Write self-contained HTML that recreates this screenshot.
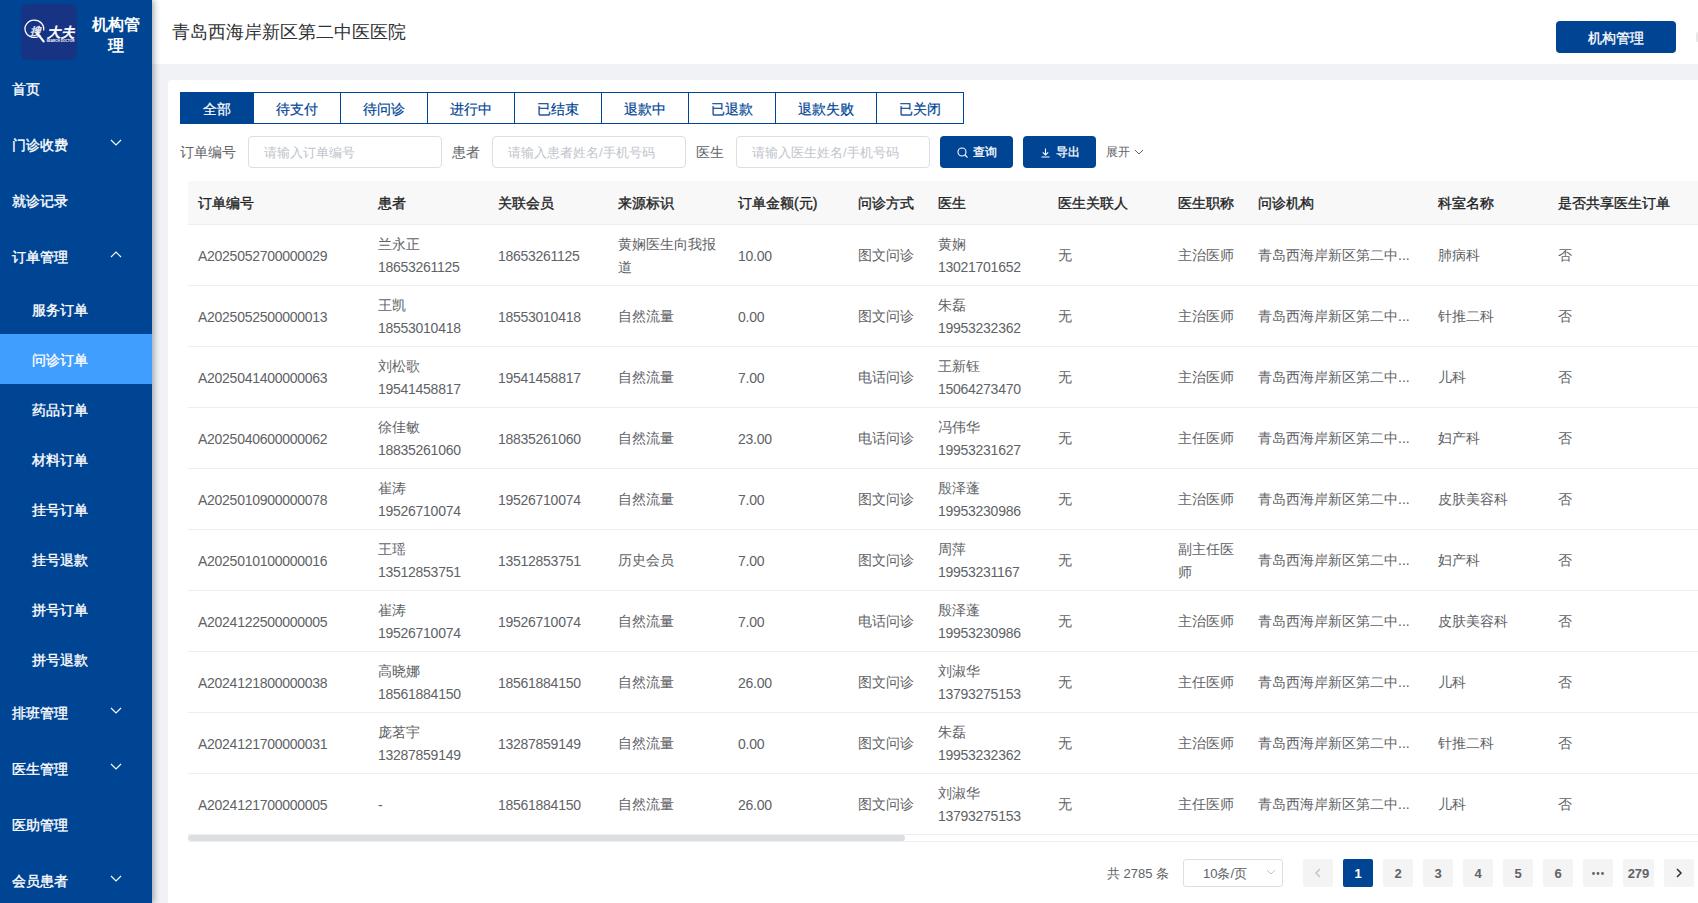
<!DOCTYPE html>
<html><head><meta charset="utf-8"><style>
*{box-sizing:border-box;margin:0;padding:0}
html,body{width:1698px;height:903px;overflow:hidden;background:#f0f2f5;font-family:"Liberation Sans",sans-serif;}
#side{position:absolute;left:0;top:0;width:152px;height:903px;background:#004494;box-shadow:2px 0 6px rgba(0,21,41,.35);z-index:5}
#logo{position:absolute;left:21px;top:4px;width:56px;height:56px;background:#173383;border-radius:6px}
#brand{position:absolute;left:86px;top:14px;width:60px;color:#fff;font-weight:bold;font-size:16px;line-height:21px;text-align:center}
.mi{position:absolute;left:0;width:152px;color:#fff;font-weight:normal;-webkit-text-stroke:0.35px #fff;font-size:14px;padding-left:12px;white-space:nowrap}
.mt{position:relative;top:1px}
.mi.sub{padding-left:32px}
.mi.act{background:#409eff}
.chev{position:absolute;left:110px;top:50%;margin-top:-5px}
#hdr{position:absolute;left:152px;top:0;width:1546px;height:64px;background:#fff}
#title{position:absolute;left:172px;top:20px;font-size:18px;line-height:24px;color:#303133;white-space:nowrap}
#btnorg{position:absolute;left:1556px;top:21px;width:120px;height:32px;background:#004494;border-radius:4px;color:#fff;font-size:14px;line-height:34px;text-align:center;-webkit-text-stroke:0.3px #fff}
#card{position:absolute;left:168px;top:80px;width:1600px;height:900px;background:#fff;border-radius:4px}
.tab{position:absolute;top:92px;height:32px;border:1px solid #004494;border-left:none;color:#004494;font-size:14px;line-height:31px;text-align:center;background:#fff}
.tab span{position:relative;top:1px;-webkit-text-stroke:0.2px currentColor}
.tab.on{background:#004494;color:#fff;border-left:1px solid #004494}
.lbl{position:absolute;top:136px;font-size:14px;line-height:33px;color:#606266;white-space:nowrap}
.inp{position:absolute;top:136px;width:194px;height:32px;border:1px solid #dcdfe6;border-radius:4px;font-size:13px;line-height:31px;color:#c0c4cc;padding-left:15px;white-space:nowrap}
.btn{position:absolute;top:136px;width:73px;height:32px;background:#004494;border-radius:4px;color:#fff;font-size:12px;line-height:33px;white-space:nowrap;-webkit-text-stroke:0.3px #fff}
#thead{position:absolute;left:188px;top:181px;width:1510px;height:44px;background:#f8f8f9;border-bottom:1px solid #ebeef5}
.h{position:absolute;top:181px;height:43px;line-height:44px;padding-left:10px;font-size:14px;font-weight:normal;-webkit-text-stroke:0.35px #1f1f1f;color:#1f1f1f;white-space:nowrap}
.c{position:absolute;height:60px;display:flex;align-items:center;padding-left:10px;padding-top:2px;font-size:14px;color:#606266;white-space:nowrap}
.n{letter-spacing:-0.27px}
.l2{line-height:23px}
.rl{position:absolute;left:188px;width:1510px;height:1px;background:#ebeef5}
#sb{position:absolute;left:188px;top:835px;width:717px;height:6px;background:#dddee0;border-radius:3px}
#sbl{position:absolute;left:188px;top:841px;width:1510px;height:1px;background:#ebeef5}
.pb{position:absolute;top:859px;height:28px;background:#f4f4f5;border-radius:2px;color:#606266;font-weight:bold;font-size:13px;line-height:29px;text-align:center}
.pon{background:#004494;color:#fff}
</style></head><body>
<div id="side">
  <div id="logo">
    <svg width="56" height="56" viewBox="0 0 56 56">
      <path d="M18.2 32.2 A9.4 8.6 0 1 1 22.6 26.5" fill="none" stroke="#fff" stroke-width="1.3"/>
      <path d="M16.8 30 L22.6 37.4" stroke="#fff" stroke-width="2.2" stroke-linecap="round"/>
      <text x="0" y="0" fill="#fff" stroke="#fff" stroke-width="0.3" font-size="11" transform="translate(8.5,31) skewX(-14)">搜</text>
      <text x="0" y="0" fill="#fff" stroke="#fff" stroke-width="0.7" font-size="13.5" transform="translate(26,33) skewX(-14)">大夫</text>
      <text x="25.5" y="38" fill="#fff" font-size="3.6" font-weight="bold" textLength="28" lengthAdjust="spacingAndGlyphs">SEARCH DOCTOR</text>
    </svg>
  </div>
  <div id="brand">机构管<br>理</div>
  <div class="mi" style="top:60px;height:56px;line-height:56px"><span class="mt">首页</span></div>
<div class="mi" style="top:116px;height:56px;line-height:56px"><span class="mt">门诊收费</span><svg class="chev" width="12" height="7" viewBox="0 0 12 7"><path d="M1 1 L6 6 L11 1" fill="none" stroke="#fff" stroke-width="1.1"/></svg></div>
<div class="mi" style="top:172px;height:56px;line-height:56px"><span class="mt">就诊记录</span></div>
<div class="mi" style="top:228px;height:56px;line-height:56px"><span class="mt">订单管理</span><svg class="chev" width="12" height="7" viewBox="0 0 12 7"><path d="M1 6 L6 1 L11 6" fill="none" stroke="#fff" stroke-width="1.1"/></svg></div>
<div class="mi sub" style="top:284px;height:50px;line-height:50px"><span class="mt">服务订单</span></div>
<div class="mi sub act" style="top:334px;height:50px;line-height:50px"><span class="mt">问诊订单</span></div>
<div class="mi sub" style="top:384px;height:50px;line-height:50px"><span class="mt">药品订单</span></div>
<div class="mi sub" style="top:434px;height:50px;line-height:50px"><span class="mt">材料订单</span></div>
<div class="mi sub" style="top:484px;height:50px;line-height:50px"><span class="mt">挂号订单</span></div>
<div class="mi sub" style="top:534px;height:50px;line-height:50px"><span class="mt">挂号退款</span></div>
<div class="mi sub" style="top:584px;height:50px;line-height:50px"><span class="mt">拼号订单</span></div>
<div class="mi sub" style="top:634px;height:50px;line-height:50px"><span class="mt">拼号退款</span></div>
<div class="mi" style="top:684px;height:56px;line-height:56px"><span class="mt">排班管理</span><svg class="chev" width="12" height="7" viewBox="0 0 12 7"><path d="M1 1 L6 6 L11 1" fill="none" stroke="#fff" stroke-width="1.1"/></svg></div>
<div class="mi" style="top:740px;height:56px;line-height:56px"><span class="mt">医生管理</span><svg class="chev" width="12" height="7" viewBox="0 0 12 7"><path d="M1 1 L6 6 L11 1" fill="none" stroke="#fff" stroke-width="1.1"/></svg></div>
<div class="mi" style="top:796px;height:56px;line-height:56px"><span class="mt">医助管理</span></div>
<div class="mi" style="top:852px;height:56px;line-height:56px"><span class="mt">会员患者</span><svg class="chev" width="12" height="7" viewBox="0 0 12 7"><path d="M1 1 L6 6 L11 1" fill="none" stroke="#fff" stroke-width="1.1"/></svg></div>
</div>
<div id="hdr"></div>
<div id="title">青岛西海岸新区第二中医医院</div>
<div id="btnorg">机构管理</div>
<div style="position:absolute;left:1696px;top:32px;width:4px;height:10px;background:#e6e6e6;border-radius:2px"></div>
<div id="card"></div>
<div class="tab on" style="left:180px;width:74px"><span>全部</span></div>
<div class="tab" style="left:254px;width:87px"><span>待支付</span></div>
<div class="tab" style="left:341px;width:87px"><span>待问诊</span></div>
<div class="tab" style="left:428px;width:87px"><span>进行中</span></div>
<div class="tab" style="left:515px;width:87px"><span>已结束</span></div>
<div class="tab" style="left:602px;width:87px"><span>退款中</span></div>
<div class="tab" style="left:689px;width:87px"><span>已退款</span></div>
<div class="tab" style="left:776px;width:101px"><span>退款失败</span></div>
<div class="tab" style="left:877px;width:87px"><span>已关闭</span></div>
<div class="lbl" style="left:180px">订单编号</div>
<div class="inp" style="left:248px">请输入订单编号</div>
<div class="lbl" style="left:452px">患者</div>
<div class="inp" style="left:492px">请输入患者姓名/手机号码</div>
<div class="lbl" style="left:696px">医生</div>
<div class="inp" style="left:736px">请输入医生姓名/手机号码</div>
<div class="btn" style="left:940px"><svg style="position:absolute;left:17px;top:11px" width="11" height="11" viewBox="0 0 11 11"><circle cx="5" cy="5" r="4" fill="none" stroke="#fff" stroke-width="1.1"/><path d="M8 8 L10.5 10.5" stroke="#fff" stroke-width="1.1"/></svg><span style="position:absolute;left:33px">查询</span></div>
<div class="btn" style="left:1023px"><svg style="position:absolute;left:17px;top:11px" width="11" height="11" viewBox="0 0 11 11"><path d="M5.5 1.5 V8 M2.8 5.3 L5.5 8 L8.2 5.3 M1.5 10 H9.5" fill="none" stroke="#fff" stroke-width="1.1"/></svg><span style="position:absolute;left:33px">导出</span></div>
<div class="lbl" style="left:1106px;font-size:12px">展开</div>
<svg style="position:absolute;left:1134px;top:149px" width="10" height="6" viewBox="0 0 10 6"><path d="M1 1 L5 5 L9 1" fill="none" stroke="#606266" stroke-width="1"/></svg>
<div id="thead"></div>
<div class="h" style="left:188px;width:180px">订单编号</div>
<div class="h" style="left:368px;width:120px">患者</div>
<div class="h" style="left:488px;width:120px">关联会员</div>
<div class="h" style="left:608px;width:120px">来源标识</div>
<div class="h" style="left:728px;width:120px">订单金额(元)</div>
<div class="h" style="left:848px;width:80px">问诊方式</div>
<div class="h" style="left:928px;width:120px">医生</div>
<div class="h" style="left:1048px;width:120px">医生关联人</div>
<div class="h" style="left:1168px;width:80px">医生职称</div>
<div class="h" style="left:1248px;width:180px">问诊机构</div>
<div class="h" style="left:1428px;width:120px">科室名称</div>
<div class="h" style="left:1548px;width:160px">是否共享医生订单</div>
<div class="c" style="left:188px;top:225px;width:180px"><span class="n">A2025052700000029</span></div>
<div class="c" style="left:368px;top:225px;width:120px"><div class="l2">兰永正<br><span class="n">18653261125</span></div></div>
<div class="c" style="left:488px;top:225px;width:120px"><span class="n">18653261125</span></div>
<div class="c" style="left:608px;top:225px;width:120px"><div class="l2">黄娴医生向我报<br>道</div></div>
<div class="c" style="left:728px;top:225px;width:120px"><span class="n">10.00</span></div>
<div class="c" style="left:848px;top:225px;width:80px">图文问诊</div>
<div class="c" style="left:928px;top:225px;width:120px"><div class="l2">黄娴<br><span class="n">13021701652</span></div></div>
<div class="c" style="left:1048px;top:225px;width:120px">无</div>
<div class="c" style="left:1168px;top:225px;width:80px">主治医师</div>
<div class="c" style="left:1248px;top:225px;width:180px">青岛西海岸新区第二中...</div>
<div class="c" style="left:1428px;top:225px;width:120px">肺病科</div>
<div class="c" style="left:1548px;top:225px;width:160px">否</div>
<div class="rl" style="top:285px"></div><div class="c" style="left:188px;top:286px;width:180px"><span class="n">A2025052500000013</span></div>
<div class="c" style="left:368px;top:286px;width:120px"><div class="l2">王凯<br><span class="n">18553010418</span></div></div>
<div class="c" style="left:488px;top:286px;width:120px"><span class="n">18553010418</span></div>
<div class="c" style="left:608px;top:286px;width:120px">自然流量</div>
<div class="c" style="left:728px;top:286px;width:120px"><span class="n">0.00</span></div>
<div class="c" style="left:848px;top:286px;width:80px">图文问诊</div>
<div class="c" style="left:928px;top:286px;width:120px"><div class="l2">朱磊<br><span class="n">19953232362</span></div></div>
<div class="c" style="left:1048px;top:286px;width:120px">无</div>
<div class="c" style="left:1168px;top:286px;width:80px">主治医师</div>
<div class="c" style="left:1248px;top:286px;width:180px">青岛西海岸新区第二中...</div>
<div class="c" style="left:1428px;top:286px;width:120px">针推二科</div>
<div class="c" style="left:1548px;top:286px;width:160px">否</div>
<div class="rl" style="top:346px"></div><div class="c" style="left:188px;top:347px;width:180px"><span class="n">A2025041400000063</span></div>
<div class="c" style="left:368px;top:347px;width:120px"><div class="l2">刘松歌<br><span class="n">19541458817</span></div></div>
<div class="c" style="left:488px;top:347px;width:120px"><span class="n">19541458817</span></div>
<div class="c" style="left:608px;top:347px;width:120px">自然流量</div>
<div class="c" style="left:728px;top:347px;width:120px"><span class="n">7.00</span></div>
<div class="c" style="left:848px;top:347px;width:80px">电话问诊</div>
<div class="c" style="left:928px;top:347px;width:120px"><div class="l2">王新钰<br><span class="n">15064273470</span></div></div>
<div class="c" style="left:1048px;top:347px;width:120px">无</div>
<div class="c" style="left:1168px;top:347px;width:80px">主治医师</div>
<div class="c" style="left:1248px;top:347px;width:180px">青岛西海岸新区第二中...</div>
<div class="c" style="left:1428px;top:347px;width:120px">儿科</div>
<div class="c" style="left:1548px;top:347px;width:160px">否</div>
<div class="rl" style="top:407px"></div><div class="c" style="left:188px;top:408px;width:180px"><span class="n">A2025040600000062</span></div>
<div class="c" style="left:368px;top:408px;width:120px"><div class="l2">徐佳敏<br><span class="n">18835261060</span></div></div>
<div class="c" style="left:488px;top:408px;width:120px"><span class="n">18835261060</span></div>
<div class="c" style="left:608px;top:408px;width:120px">自然流量</div>
<div class="c" style="left:728px;top:408px;width:120px"><span class="n">23.00</span></div>
<div class="c" style="left:848px;top:408px;width:80px">电话问诊</div>
<div class="c" style="left:928px;top:408px;width:120px"><div class="l2">冯伟华<br><span class="n">19953231627</span></div></div>
<div class="c" style="left:1048px;top:408px;width:120px">无</div>
<div class="c" style="left:1168px;top:408px;width:80px">主任医师</div>
<div class="c" style="left:1248px;top:408px;width:180px">青岛西海岸新区第二中...</div>
<div class="c" style="left:1428px;top:408px;width:120px">妇产科</div>
<div class="c" style="left:1548px;top:408px;width:160px">否</div>
<div class="rl" style="top:468px"></div><div class="c" style="left:188px;top:469px;width:180px"><span class="n">A2025010900000078</span></div>
<div class="c" style="left:368px;top:469px;width:120px"><div class="l2">崔涛<br><span class="n">19526710074</span></div></div>
<div class="c" style="left:488px;top:469px;width:120px"><span class="n">19526710074</span></div>
<div class="c" style="left:608px;top:469px;width:120px">自然流量</div>
<div class="c" style="left:728px;top:469px;width:120px"><span class="n">7.00</span></div>
<div class="c" style="left:848px;top:469px;width:80px">图文问诊</div>
<div class="c" style="left:928px;top:469px;width:120px"><div class="l2">殷泽蓬<br><span class="n">19953230986</span></div></div>
<div class="c" style="left:1048px;top:469px;width:120px">无</div>
<div class="c" style="left:1168px;top:469px;width:80px">主治医师</div>
<div class="c" style="left:1248px;top:469px;width:180px">青岛西海岸新区第二中...</div>
<div class="c" style="left:1428px;top:469px;width:120px">皮肤美容科</div>
<div class="c" style="left:1548px;top:469px;width:160px">否</div>
<div class="rl" style="top:529px"></div><div class="c" style="left:188px;top:530px;width:180px"><span class="n">A2025010100000016</span></div>
<div class="c" style="left:368px;top:530px;width:120px"><div class="l2">王瑶<br><span class="n">13512853751</span></div></div>
<div class="c" style="left:488px;top:530px;width:120px"><span class="n">13512853751</span></div>
<div class="c" style="left:608px;top:530px;width:120px">历史会员</div>
<div class="c" style="left:728px;top:530px;width:120px"><span class="n">7.00</span></div>
<div class="c" style="left:848px;top:530px;width:80px">图文问诊</div>
<div class="c" style="left:928px;top:530px;width:120px"><div class="l2">周萍<br><span class="n">19953231167</span></div></div>
<div class="c" style="left:1048px;top:530px;width:120px">无</div>
<div class="c" style="left:1168px;top:530px;width:80px"><div class="l2">副主任医<br>师</div></div>
<div class="c" style="left:1248px;top:530px;width:180px">青岛西海岸新区第二中...</div>
<div class="c" style="left:1428px;top:530px;width:120px">妇产科</div>
<div class="c" style="left:1548px;top:530px;width:160px">否</div>
<div class="rl" style="top:590px"></div><div class="c" style="left:188px;top:591px;width:180px"><span class="n">A2024122500000005</span></div>
<div class="c" style="left:368px;top:591px;width:120px"><div class="l2">崔涛<br><span class="n">19526710074</span></div></div>
<div class="c" style="left:488px;top:591px;width:120px"><span class="n">19526710074</span></div>
<div class="c" style="left:608px;top:591px;width:120px">自然流量</div>
<div class="c" style="left:728px;top:591px;width:120px"><span class="n">7.00</span></div>
<div class="c" style="left:848px;top:591px;width:80px">电话问诊</div>
<div class="c" style="left:928px;top:591px;width:120px"><div class="l2">殷泽蓬<br><span class="n">19953230986</span></div></div>
<div class="c" style="left:1048px;top:591px;width:120px">无</div>
<div class="c" style="left:1168px;top:591px;width:80px">主治医师</div>
<div class="c" style="left:1248px;top:591px;width:180px">青岛西海岸新区第二中...</div>
<div class="c" style="left:1428px;top:591px;width:120px">皮肤美容科</div>
<div class="c" style="left:1548px;top:591px;width:160px">否</div>
<div class="rl" style="top:651px"></div><div class="c" style="left:188px;top:652px;width:180px"><span class="n">A2024121800000038</span></div>
<div class="c" style="left:368px;top:652px;width:120px"><div class="l2">高晓娜<br><span class="n">18561884150</span></div></div>
<div class="c" style="left:488px;top:652px;width:120px"><span class="n">18561884150</span></div>
<div class="c" style="left:608px;top:652px;width:120px">自然流量</div>
<div class="c" style="left:728px;top:652px;width:120px"><span class="n">26.00</span></div>
<div class="c" style="left:848px;top:652px;width:80px">图文问诊</div>
<div class="c" style="left:928px;top:652px;width:120px"><div class="l2">刘淑华<br><span class="n">13793275153</span></div></div>
<div class="c" style="left:1048px;top:652px;width:120px">无</div>
<div class="c" style="left:1168px;top:652px;width:80px">主任医师</div>
<div class="c" style="left:1248px;top:652px;width:180px">青岛西海岸新区第二中...</div>
<div class="c" style="left:1428px;top:652px;width:120px">儿科</div>
<div class="c" style="left:1548px;top:652px;width:160px">否</div>
<div class="rl" style="top:712px"></div><div class="c" style="left:188px;top:713px;width:180px"><span class="n">A2024121700000031</span></div>
<div class="c" style="left:368px;top:713px;width:120px"><div class="l2">庞茗宇<br><span class="n">13287859149</span></div></div>
<div class="c" style="left:488px;top:713px;width:120px"><span class="n">13287859149</span></div>
<div class="c" style="left:608px;top:713px;width:120px">自然流量</div>
<div class="c" style="left:728px;top:713px;width:120px"><span class="n">0.00</span></div>
<div class="c" style="left:848px;top:713px;width:80px">图文问诊</div>
<div class="c" style="left:928px;top:713px;width:120px"><div class="l2">朱磊<br><span class="n">19953232362</span></div></div>
<div class="c" style="left:1048px;top:713px;width:120px">无</div>
<div class="c" style="left:1168px;top:713px;width:80px">主治医师</div>
<div class="c" style="left:1248px;top:713px;width:180px">青岛西海岸新区第二中...</div>
<div class="c" style="left:1428px;top:713px;width:120px">针推二科</div>
<div class="c" style="left:1548px;top:713px;width:160px">否</div>
<div class="rl" style="top:773px"></div><div class="c" style="left:188px;top:774px;width:180px"><span class="n">A2024121700000005</span></div>
<div class="c" style="left:368px;top:774px;width:120px"><span>-</span></div>
<div class="c" style="left:488px;top:774px;width:120px"><span class="n">18561884150</span></div>
<div class="c" style="left:608px;top:774px;width:120px">自然流量</div>
<div class="c" style="left:728px;top:774px;width:120px"><span class="n">26.00</span></div>
<div class="c" style="left:848px;top:774px;width:80px">图文问诊</div>
<div class="c" style="left:928px;top:774px;width:120px"><div class="l2">刘淑华<br><span class="n">13793275153</span></div></div>
<div class="c" style="left:1048px;top:774px;width:120px">无</div>
<div class="c" style="left:1168px;top:774px;width:80px">主任医师</div>
<div class="c" style="left:1248px;top:774px;width:180px">青岛西海岸新区第二中...</div>
<div class="c" style="left:1428px;top:774px;width:120px">儿科</div>
<div class="c" style="left:1548px;top:774px;width:160px">否</div>
<div class="rl" style="top:834px"></div>
<div id="sb"></div>
<div id="sbl"></div>
<div style="position:absolute;left:1107px;top:859px;font-size:13px;line-height:29px;color:#606266;white-space:nowrap">共 2785 条</div>
<div style="position:absolute;left:1183px;top:859px;width:100px;height:28px;border:1px solid #dcdfe6;border-radius:3px;font-size:13px;line-height:27px;color:#606266;padding-left:19px;white-space:nowrap">10条/页</div>
<svg style="position:absolute;left:1266px;top:869px" width="10" height="6" viewBox="0 0 10 6"><path d="M1 1 L5 5 L9 1" fill="none" stroke="#c0c4cc" stroke-width="1"/></svg>
<div class="pb" style="left:1303px;width:30px"><svg style="position:absolute;left:11px;top:9px" width="8" height="10" viewBox="0 0 8 10"><path d="M6 1 L2 5 L6 9" fill="none" stroke="#c0c4cc" stroke-width="1.5"/></svg></div>
<div class="pb pon" style="left:1343px;width:30px">1</div>
<div class="pb" style="left:1383px;width:30px">2</div>
<div class="pb" style="left:1423px;width:30px">3</div>
<div class="pb" style="left:1463px;width:30px">4</div>
<div class="pb" style="left:1503px;width:30px">5</div>
<div class="pb" style="left:1543px;width:30px">6</div>
<div class="pb" style="left:1623px;width:31px">279</div>
<div class="pb" style="left:1583px;width:30px"><svg style="position:absolute;left:9px;top:13px" width="12" height="3" viewBox="0 0 12 3"><circle cx="1.5" cy="1.5" r="1.4" fill="#606266"/><circle cx="6" cy="1.5" r="1.4" fill="#606266"/><circle cx="10.5" cy="1.5" r="1.4" fill="#606266"/></svg></div>
<div class="pb" style="left:1664px;width:30px"><svg style="position:absolute;left:11px;top:9px" width="8" height="10" viewBox="0 0 8 10"><path d="M2 1 L6 5 L2 9" fill="none" stroke="#303133" stroke-width="1.5"/></svg></div>
</body></html>
